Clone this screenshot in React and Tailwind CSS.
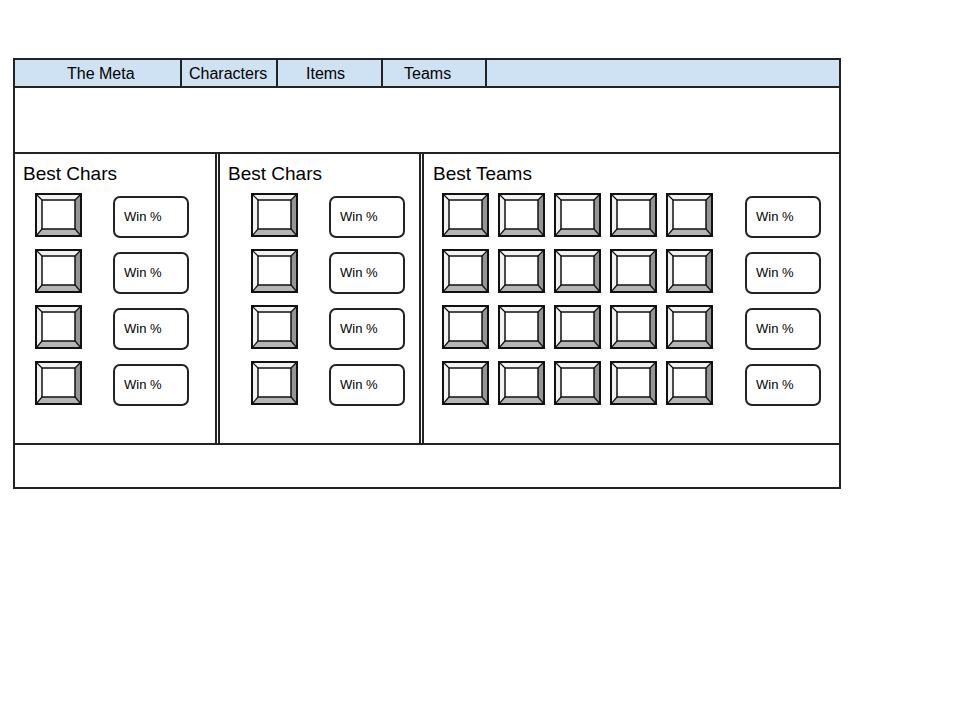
import React from "react";

function Bevel() {
  return (
    <svg width="47" height="44" viewBox="0 0 47 44" className="block shrink-0">
      <polygon points="1,1 46,1 40,7 7,7" fill="#f2f2f2" />
      <polygon points="1,1 7,7 7,36 1,43" fill="#f2f2f2" />
      <polygon points="46,1 46,43 40,36 40,7" fill="#959595" />
      <polygon points="1,43 46,43 40,36 7,36" fill="#b5b5b5" />
      <rect x="7" y="7" width="33" height="29" fill="#ffffff" stroke="#111" strokeWidth="1.5" />
      <line x1="1" y1="1" x2="7" y2="7" stroke="#111" strokeWidth="1.2" />
      <line x1="46" y1="1" x2="40" y2="7" stroke="#111" strokeWidth="1.2" />
      <line x1="1" y1="43" x2="7" y2="36" stroke="#111" strokeWidth="1.2" />
      <line x1="46" y1="43" x2="40" y2="36" stroke="#111" strokeWidth="1.2" />
      <rect x="1" y="1" width="45" height="42" fill="none" stroke="#111" strokeWidth="2" />
    </svg>
  );
}

function WinBox() {
  return (
    <div className="mt-[3px] w-[76px] h-[42px] border-2 border-[#222] rounded-[7px] flex items-center pl-[9px] text-[13px] text-black">
      Win %
    </div>
  );
}

function CharPanel({ pl, className }) {
  return (
    <div className={className}>
      <div className="pl-2 pt-[9px] text-[19px] leading-[21px] text-black">Best Chars</div>
      <div className={`flex flex-col gap-[11px] mt-[9px] ${pl}`}>
        {[0, 1, 2, 3].map((i) => (
          <div key={i} className="flex items-start gap-[31px]">
            <Bevel />
            <WinBox />
          </div>
        ))}
      </div>
    </div>
  );
}

export default function App() {
  const tabs = [
    ["The Meta", "w-[167px] pl-[52px]"],
    ["Characters", "w-[96px] pl-[7px]"],
    ["Items", "w-[105px] pl-[28px]"],
    ["Teams", "w-[104px] pl-[21px]"],
  ];
  return (
    <div className="w-[960px] h-[720px] bg-white pt-[58px] pl-[13px]" style={{ fontFamily: '"Liberation Sans", Arial, sans-serif' }}>
      <div className="w-[828px] border-2 border-[#222] flex flex-col">
        <div className="h-[28px] bg-[#cfe2f3] border-b-2 border-[#222] flex">
          {tabs.map(([t, w]) => (
            <div key={t} className={`${w} border-r-2 border-[#222] flex items-center pt-[2px] text-[16px] text-black`}>
              {t}
            </div>
          ))}
          <div className="flex-1" />
        </div>
        <div className="h-[64px]" />
        <div className="h-[293px] border-t-2 border-b-2 border-[#222] flex gap-[1px]">
          <CharPanel pl="pl-[20px]" className="w-[202px] border-r-2 border-[#222]" />
          <CharPanel pl="pl-[31px]" className="w-[203px] border-l-2 border-r-2 border-[#222]" />
          <div className="flex-1 border-l-2 border-[#222]">
            <div className="pl-[9px] pt-[9px] text-[19px] leading-[21px] text-black">Best Teams</div>
            <div className="flex flex-col gap-[11px] mt-[9px] pl-[18px]">
              {[0, 1, 2, 3].map((i) => (
                <div key={i} className="flex items-start">
                  <div className="flex gap-[9px]">
                    {[0, 1, 2, 3, 4].map((j) => (
                      <Bevel key={j} />
                    ))}
                  </div>
                  <div className="ml-[32px]">
                    <WinBox />
                  </div>
                </div>
              ))}
            </div>
          </div>
        </div>
        <div className="h-[42px]" />
      </div>
    </div>
  );
}
